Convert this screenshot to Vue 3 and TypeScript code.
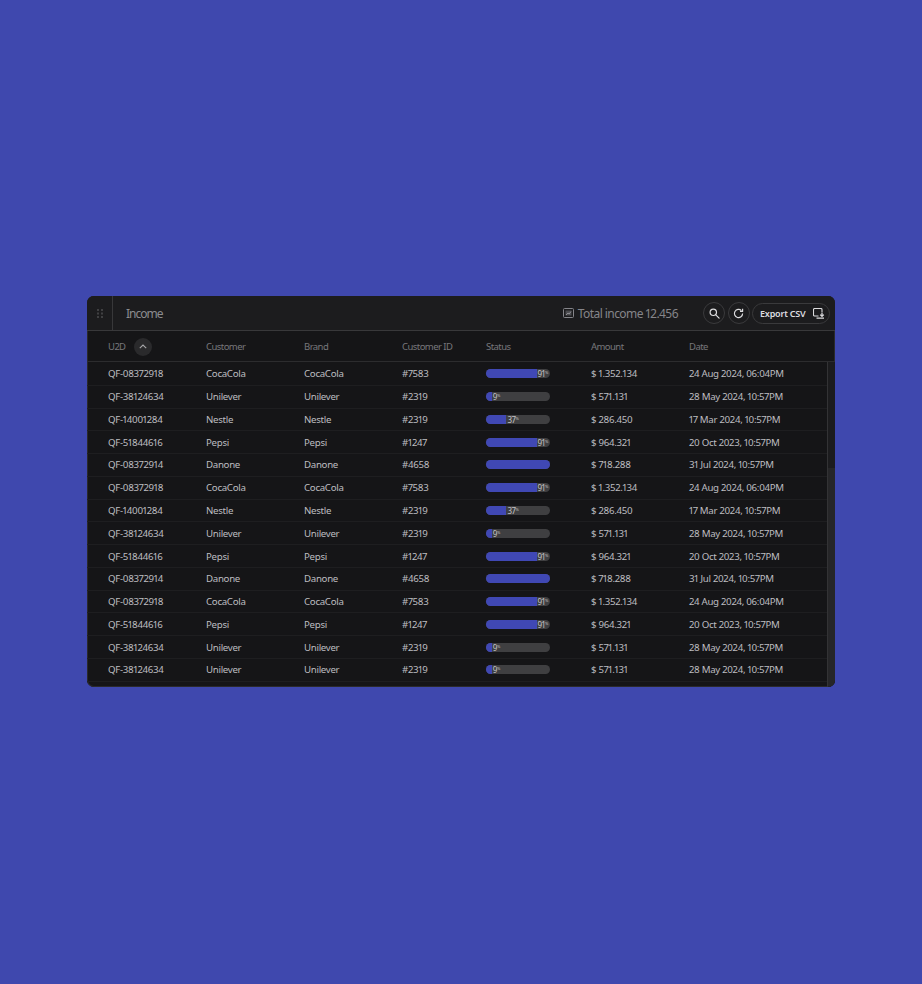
<script setup lang="ts">
interface Row { id: string; customer: string; cid: string; pct: number; fill: number; amount: string; date: string }

const base: Record<string, Omit<Row, 'id'>> = {
  coca: { customer: 'CocaCola', cid: '#7583', pct: 91, fill: 79, amount: '$ 1.352.134', date: '24 Aug 2024, 06:04PM' },
  uni: { customer: 'Unilever', cid: '#2319', pct: 9, fill: 9, amount: '$ 571.131', date: '28 May 2024, 10:57PM' },
  nes: { customer: 'Nestle', cid: '#2319', pct: 37, fill: 32, amount: '$ 286.450', date: '17 Mar 2024, 10:57PM' },
  pep: { customer: 'Pepsi', cid: '#1247', pct: 91, fill: 79, amount: '$ 964.321', date: '20 Oct 2023, 10:57PM' },
  dan: { customer: 'Danone', cid: '#4658', pct: 100, fill: 100, amount: '$ 718.288', date: '31 Jul 2024, 10:57PM' },
}
const list: [string, string][] = [
  ['QF-08372918', 'coca'], ['QF-38124634', 'uni'], ['QF-14001284', 'nes'], ['QF-51844616', 'pep'],
  ['QF-08372914', 'dan'], ['QF-08372918', 'coca'], ['QF-14001284', 'nes'], ['QF-38124634', 'uni'],
  ['QF-51844616', 'pep'], ['QF-08372914', 'dan'], ['QF-08372918', 'coca'], ['QF-51844616', 'pep'],
  ['QF-38124634', 'uni'], ['QF-38124634', 'uni'],
]
const rows: Row[] = list.map(([id, k]) => ({ id, ...base[k] }))
</script>

<template>
  <div class="page">
    <section class="card">
      <header class="top">
        <div class="grip">
          <svg width="6" height="9" viewBox="0 0 6 9" fill="#404042">
            <rect x="0" y="0" width="2" height="2" /><rect x="4" y="0" width="2" height="2" />
            <rect x="0" y="3.5" width="2" height="2" /><rect x="4" y="3.5" width="2" height="2" />
            <rect x="0" y="7" width="2" height="2" /><rect x="4" y="7" width="2" height="2" />
          </svg>
        </div>
        <h1 class="title">Income</h1>
        <div class="total">
          <svg width="11" height="10" viewBox="0 0 11 10" fill="none" stroke="#85858a" stroke-width="1">
            <rect x="0.5" y="0.5" width="10" height="9" rx="1" />
            <rect x="2.5" y="2.5" width="6" height="5" fill="#4c4c50" stroke="none" />
            <path d="M3 7l2-2 1.2 1L8 3.5" stroke="#a0a0a4" stroke-width="0.8" />
          </svg>
          <span>Total income 12.456</span>
        </div>
        <button class="round" aria-label="Search">
          <svg width="11" height="11" viewBox="0 0 11 11" fill="none" stroke="#dcdcde" stroke-width="1.2">
            <circle cx="4.3" cy="4.3" r="3.2" /><path d="M6.8 6.8l3.3 3.3" stroke-linecap="round" />
          </svg>
        </button>
        <button class="round" aria-label="Refresh">
          <svg width="11" height="11" viewBox="0 0 11 11" fill="none" stroke="#dcdcde" stroke-width="1.2">
            <path d="M9.6 5.5a4.1 4.1 0 1 1-1.2-2.9" />
            <path d="M9.6 0.8v2.6H7" stroke-linejoin="round" />
          </svg>
        </button>
        <button class="export">
          <span>Export CSV</span>
          <svg width="12" height="11" viewBox="0 0 12 11" fill="none" stroke="#dcdcde" stroke-width="1.1">
            <path d="M5.5 8H1.5a1 1 0 0 1-1-1V1.5a1 1 0 0 1 1-1h6.5a1 1 0 0 1 1 1V4" />
            <path d="M9 4.5v3.5M7.2 6.6L9 8.4l1.8-1.8" stroke-width="1.3" />
            <path d="M3.5 10.2h7.5" stroke-width="1.2" />
          </svg>
        </button>
      </header>

      <div class="head grid">
        <div class="u2d">
          <span>U2D</span>
          <span class="sort">
            <svg width="8" height="5" viewBox="0 0 8 5" fill="none" stroke="#a6a6a8" stroke-width="1.1">
              <path d="M0.8 4.2L4 1l3.2 3.2" />
            </svg>
          </span>
        </div>
        <span>Customer</span>
        <span>Brand</span>
        <span>Customer ID</span>
        <span>Status</span>
        <span>Amount</span>
        <span>Date</span>
      </div>

      <div class="body">
        <div class="rows">
          <div v-for="(r, i) in rows" :key="i" class="row grid">
            <span>{{ r.id }}</span>
            <span>{{ r.customer }}</span>
            <span>{{ r.customer }}</span>
            <span>{{ r.cid }}</span>
            <div class="bar">
              <div class="fill" :style="{ width: r.fill + '%' }"></div>
              <span v-if="r.pct < 100" class="pct">{{ r.pct }}<sup>%</sup></span>
            </div>
            <span>{{ r.amount }}</span>
            <span>{{ r.date }}</span>
          </div>
        </div>
        <div class="track"><div class="thumb"></div></div>
      </div>
    </section>
  </div>
</template>

<style>
html, body { margin: 0; background: #3f48ae; }
</style>

<style scoped>
.page {
  width: 922px;
  height: 984px;
  box-sizing: border-box;
  padding: 296px 87px 297px;
  background: #3f48ae;
  font-family: "Noto Sans", sans-serif;
  font-variant-numeric: proportional-nums;
}
.card {
  height: 391px;
  display: flex;
  flex-direction: column;
  background: #151517;
  border-radius: 7px;
  overflow: hidden;
  box-shadow: inset 0 0 0 1px #2a2a2c;
}
.top {
  height: 35px;
  box-sizing: border-box;
  flex: none;
  display: flex;
  align-items: center;
  background: #1c1c1e;
  border-bottom: 1px solid #38383a;
  padding-right: 5px;
}
.grip {
  width: 25px;
  height: 100%;
  flex: none;
  display: flex;
  align-items: center;
  justify-content: center;
  border-right: 1px solid #38383a;
}
.title {
  margin: 0 0 0 13px;
  flex: 1;
  font-size: 12px;
  font-weight: 400;
  letter-spacing: -1px;
  color: #8c8c90;
}
.total {
  display: flex;
  align-items: center;
  gap: 4px;
  font-size: 12px;
  letter-spacing: -0.55px;
  color: #85858a;
  margin-right: 25px;
}
.round {
  width: 22px;
  height: 22px;
  padding: 0;
  margin-right: 2.5px;
  display: flex;
  align-items: center;
  justify-content: center;
  background: transparent;
  border: 1px solid #3a3a3c;
  border-radius: 50%;
}
.export {
  width: 78px;
  height: 21px;
  padding: 0 4px 0 7px;
  display: flex;
  align-items: center;
  justify-content: space-between;
  background: transparent;
  border: 1px solid #3a3a3c;
  border-radius: 11px;
  font-family: inherit;
  font-size: 9px;
  font-weight: 600;
  letter-spacing: -0.2px;
  color: #dedee0;
}
.grid {
  display: grid;
  grid-template-columns: 98px 98px 98px 84px 105px 98px 1fr;
  align-items: center;
  padding-left: 21px;
}
.head {
  height: 31px;
  flex: none;
  box-sizing: border-box;
  padding-top: 1px;
  border-bottom: 1px solid #2c2c2e;
  font-size: 9.5px;
  letter-spacing: -0.55px;
  color: #77777b;
}
.u2d {
  display: flex;
  align-items: center;
  gap: 8px;
}
.sort {
  width: 18px;
  height: 18px;
  display: flex;
  align-items: center;
  justify-content: center;
  border-radius: 50%;
  background: #2a2a2c;
}
.body {
  flex: 1;
  min-height: 0;
  display: flex;
}
.rows {
  flex: 1;
  min-width: 0;
  padding-top: 1px;
}
.row {
  height: 22.77px;
  box-sizing: border-box;
  border-bottom: 1px solid #1e1e20;
  font-size: 9.7px;
  letter-spacing: -0.3px;
  color: #bdbdc0;
}
.bar {
  position: relative;
  width: 64px;
  height: 9px;
  border-radius: 5px;
  background: #3f3f41;
  display: flex;
}
.fill {
  height: 100%;
  flex: none;
  border-radius: 5px 0 0 5px;
  background: #4048b4;
}
.fill:only-child { border-radius: 5px; }
.pct {
  padding-left: 1px;
  font-size: 8px;
  line-height: 9px;
  color: #c4c4c6;
  white-space: nowrap;
}
.pct sup {
  font-size: 4px;
  line-height: 0;
  vertical-align: 3px;
}
.track {
  width: 8px;
  flex: none;
  display: flex;
  flex-direction: column;
  justify-content: flex-end;
  background: #1c1c1e;
  border-left: 1px solid #333335;
  box-sizing: border-box;
}
.thumb {
  height: 219px;
  background: #262628;
}
</style>
